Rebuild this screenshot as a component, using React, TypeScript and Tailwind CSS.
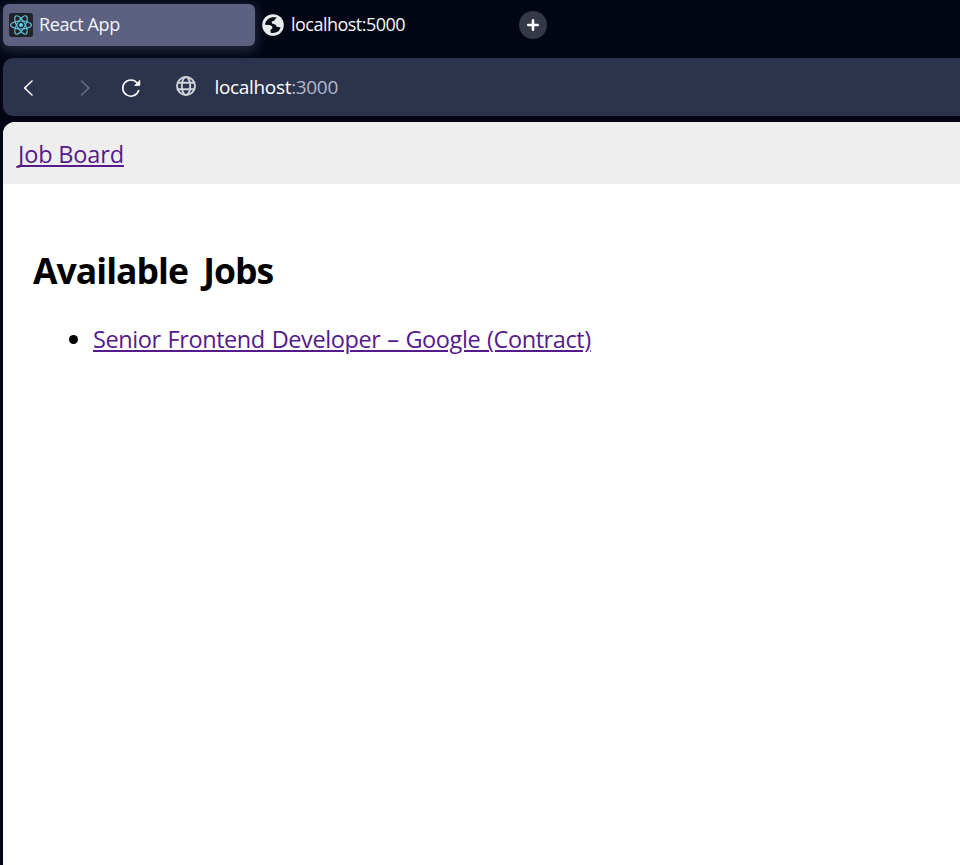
import React from "react";

function ReactLogo() {
  return (
    <svg viewBox="0 0 24 24" className="size-6 shrink-0" fill="none">
      <rect width="24" height="24" rx="3" fill="#202227" />
      <g stroke="#5fcbe3" strokeWidth="1.1">
        <ellipse cx="12" cy="12" rx="10.4" ry="4" />
        <ellipse cx="12" cy="12" rx="10.4" ry="4" transform="rotate(60 12 12)" />
        <ellipse cx="12" cy="12" rx="10.4" ry="4" transform="rotate(120 12 12)" />
      </g>
      <circle cx="12" cy="12" r="2" fill="#61d4ee" />
    </svg>
  );
}

function EarthIcon() {
  return (
    <svg viewBox="0 0 22 22" className="size-[22px] shrink-0" fill="none">
      <circle cx="11" cy="11" r="10.8" fill="#e9eaec" />
      <path
        d="M14.8 3.6C12 2.8 8.5 3.2 6 5.2C4 6.8 3 9 3 10.8L8 11L10.3 12.5V14.5L8.4 16L8.8 18.8C12 19.4 15.5 18.4 17.2 16.2L18.6 13.2L15 13L13.2 10.4L10 9.4L9.6 7.6L12.2 6.8L13 5.2Z"
        fill="#050714"
      />
    </svg>
  );
}

function GlobeIcon() {
  return (
    <svg viewBox="0 0 20 20" className="size-5 shrink-0" fill="none" stroke="#d0d3d7" strokeWidth="1.9">
      <circle cx="10" cy="10" r="9" />
      <ellipse cx="10" cy="10" rx="4.2" ry="9" />
      <path d="M1.8 6.8h16.4M1.8 13.2h16.4" />
    </svg>
  );
}

function Tabs() {
  return (
    <div className="flex h-[58px] items-start pl-[3px] pt-1">
      <div className="flex h-[42px] w-[252px] items-center rounded-md bg-[#5c6180] pl-1.5 shadow-[0_3px_12px_2px_rgba(92,97,128,0.4)]">
        <ReactLogo />
        <span className="-mt-0.5 ml-1.5 text-[18px] leading-6 tracking-[-0.4px] text-[#f6f7fb]">React App</span>
      </div>
      <div className="flex h-[42px] w-[264px] items-center pl-[7px]">
        <EarthIcon />
        <span className="-mt-0.5 ml-[7px] text-[18px] leading-6 tracking-[-0.52px] text-[#f6f7fb]">localhost:5000</span>
      </div>
      <div className="mt-[7px] flex size-7 items-center justify-center rounded-full bg-[#353847]">
        <svg viewBox="0 0 12 12" className="size-3" stroke="#fff" strokeWidth="2.6" strokeLinecap="round">
          <path d="M6 1.3v9.4M1.3 6h9.4" />
        </svg>
      </div>
    </div>
  );
}

function Toolbar() {
  return (
    <div className="ml-[3px] flex h-[58px] items-center rounded-l-[10px] bg-[#2c334c]">
      <svg viewBox="0 0 10 16" className="ml-5 mt-0.5 h-4 w-2.5" fill="none" stroke="#fff" strokeWidth="1.6" strokeLinecap="round">
        <path d="M9 1 1.7 8 9 15" />
      </svg>
      <svg viewBox="0 0 10 16" className="ml-[47px] mt-0.5 h-4 w-2.5" fill="none" stroke="#656b80" strokeWidth="1.6" strokeLinecap="round">
        <path d="m1.5 1 7.3 7-7.3 7" />
      </svg>
      <svg viewBox="0 0 20 20" className="ml-[31px] mt-0.5 size-5" fill="none" stroke="#fff" strokeWidth="1.6" strokeLinecap="round">
        <path d="M17.6 12.5A8.1 8.1 0 1 1 16.2 5" />
        <path d="M18.8 2.6V7.4H14Z" fill="#fff" strokeWidth=".8" strokeLinejoin="round" />
      </svg>
      <div className="-mt-0.5 ml-[35px]"><GlobeIcon /></div>
      <span className="ml-[18.5px] text-[19px] leading-6 tracking-[-0.33px] text-[#b1b8ca]">
        <span className="text-white">localhost</span>:3000
      </span>
    </div>
  );
}

export default function App() {
  return (
    <div className="flex h-[865px] w-full flex-col overflow-hidden bg-[#020514] font-['Open_Sans','Noto_Sans',sans-serif]">
      <Tabs />
      <Toolbar />
      <div className="ml-[3px] mt-1.5 flex-1 overflow-hidden rounded-tl-[12px] bg-white text-black">
        <nav className="h-[62px] bg-[#eeeeee] pl-[15px] pt-[16px] text-[23.5px] leading-8 tracking-[-0.15px]">
          <a className="text-[#551a8b] underline decoration-2 underline-offset-2 [text-decoration-skip-ink:none]">Job Board</a>
        </nav>
        <main className="pl-[30px] pt-[62px]">
          <h2 className="text-[35.5px] font-bold leading-[48px] tracking-[-0.95px] [word-spacing:7px]">Available Jobs</h2>
          <ul className="mt-[29px] pl-[60px] text-[23.5px] leading-8 tracking-[-0.42px] [word-spacing:1.2px]">
            <li className="flex items-center">
              <span className="-ml-[24px] mr-[15px] size-[9px] rounded-full bg-black" />
              <a className="text-[#551a8b] underline decoration-2 underline-offset-2">Senior Frontend Developer – Google (Contract)</a>
            </li>
          </ul>
        </main>
      </div>
    </div>
  );
}
